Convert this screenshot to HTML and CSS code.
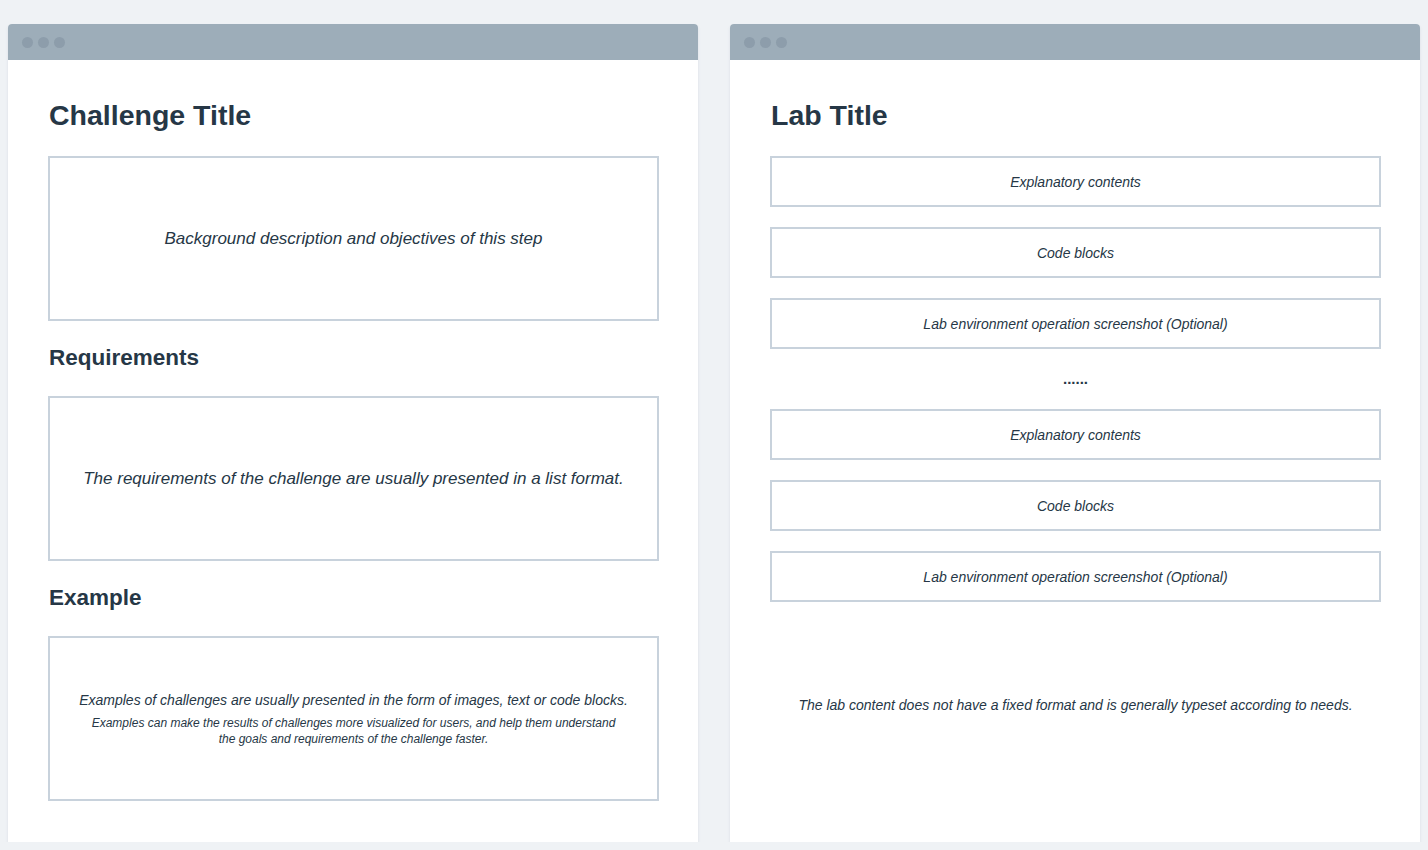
FILE: index.html
```html
<!DOCTYPE html>
<html>
<head>
<meta charset="utf-8">
<link rel="stylesheet" href="styles.css">
</head>
<body>
<div class="page">
  <div class="window">
    <div class="bar"><span class="dot"></span><span class="dot"></span><span class="dot"></span></div>
    <div class="content">
      <h1 class="title">Challenge Title</h1>
      <div class="box big"><p class="txt lg">Background description and objectives of this step</p></div>
      <h2 class="sub">Requirements</h2>
      <div class="box big"><p class="txt lg">The requirements of the challenge are usually presented in a list format.</p></div>
      <h2 class="sub">Example</h2>
      <div class="box big">
        <p class="txt ex1">Examples of challenges are usually presented in the form of images, text or code blocks.</p>
        <p class="txt ex2">Examples can make the results of challenges more visualized for users, and help them understand<br>the goals and requirements of the challenge faster.</p>
      </div>
    </div>
  </div>
  <div class="window">
    <div class="bar"><span class="dot"></span><span class="dot"></span><span class="dot"></span></div>
    <div class="content">
      <h1 class="title">Lab Title</h1>
      <div class="list">
        <div class="box small"><p class="txt sm">Explanatory contents</p></div>
        <div class="box small"><p class="txt sm">Code blocks</p></div>
        <div class="box small"><p class="txt sm">Lab environment operation screenshot (Optional)</p></div>
        <div class="more">......</div>
        <div class="box small"><p class="txt sm">Explanatory contents</p></div>
        <div class="box small"><p class="txt sm">Code blocks</p></div>
        <div class="box small"><p class="txt sm">Lab environment operation screenshot (Optional)</p></div>
      </div>
      <p class="txt sm note">The lab content does not have a fixed format and is generally typeset according to needs.</p>
    </div>
  </div>
</div>
</body>
</html>
```
FILE: styles.css
```css
html, body {
  margin: 0;
  padding: 0;
  background: #eff2f5;
  font-family: "Liberation Sans", Arial, sans-serif;
  color: #263746;
}
.page {
  display: flex;
  gap: 32px;
  padding: 24px 8px 0 8px;
}
.window {
  width: 690px;
  height: 818px;
  background: #ffffff;
  border-radius: 4px 4px 0 0;
  box-shadow: 0 2px 3px rgba(120, 140, 160, 0.18);
  display: flex;
  flex-direction: column;
  overflow: hidden;
}
.bar {
  height: 36px;
  flex: none;
  background: #9dadb9;
  display: flex;
  align-items: center;
  gap: 5px;
  padding-left: 14px;
}
.dot {
  width: 11px;
  height: 11px;
  border-radius: 50%;
  background: #8d9dab;
}
.content {
  padding: 38px 39px 0 40px;
  display: flex;
  flex-direction: column;
}
.title {
  margin: 0 0 24px 1px;
  font-size: 28.5px;
  line-height: 34px;
  font-weight: 700;
  color: #263746;
}
.sub {
  margin: 23px 0 24px 1px;
  font-size: 22.5px;
  line-height: 28px;
  font-weight: 700;
  color: #263746;
}
.box {
  border: 2px solid #c8d2dc;
  display: flex;
  flex-direction: column;
  align-items: center;
  justify-content: center;
  text-align: center;
  box-sizing: border-box;
}
.big {
  height: 165px;
}
.small {
  height: 51px;
}
.txt {
  margin: 0;
  font-style: italic;
  font-size: 16px;
  line-height: 20px;
  color: #263746;
}
.lg {
  font-size: 17px;
  line-height: 22px;
}
.ex1 {
  font-size: 14px;
  line-height: 18px;
  margin-bottom: 6px;
}
.ex2 {
  font-size: 12px;
  line-height: 16px;
}
.sm {
  font-size: 14px;
  line-height: 18px;
}
.list {
  display: flex;
  flex-direction: column;
  gap: 20px;
}
.more {
  text-align: center;
  font-size: 15px;
  line-height: 20px;
  font-weight: 700;
  color: #263746;
}
.note {
  margin-top: 94px;
  text-align: center;
}
```
